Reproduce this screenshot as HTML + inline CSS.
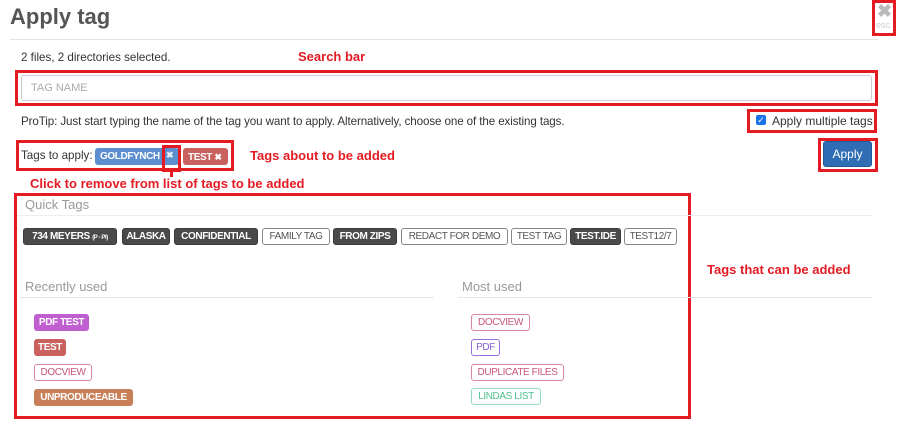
<!DOCTYPE html>
<html><head><meta charset="utf-8"><style>
*{box-sizing:border-box;margin:0;padding:0}
body{width:900px;height:430px;background:#fff;font-family:"Liberation Sans",sans-serif;color:#333;position:relative;overflow:hidden}
.a{position:absolute;white-space:nowrap}
.red{position:absolute;border:3px solid #e41b23}
.rt{position:absolute;color:#e41b23;font-weight:bold;font-size:13px;white-space:nowrap}
.b{position:absolute;height:17px;border-radius:3px;font-size:10px;font-weight:bold;line-height:16px;text-align:center;white-space:nowrap;letter-spacing:-0.4px;border:1px solid transparent;overflow:hidden}
.d{background:#4a4a4a;color:#fff;border-color:#3a3a3a}
.o{background:#fff;color:#555;border-color:#888;font-weight:normal}
.hl{position:absolute;height:1px;background:#e5e5e5}
.gr{color:#999;font-size:12px}
</style></head><body>
<div class="a" style="left:10px;top:4px;font-size:22px;font-weight:bold;color:#555">Apply tag</div>
<div class="hl" style="left:10px;top:39px;width:868px"></div>
<div class="red" style="left:872px;top:0;width:24px;height:36px"></div>
<div class="a" style="left:877px;top:2px;font-size:18px;font-weight:bold;color:#bbb;line-height:18px">✖</div>
<div class="a" style="left:876px;top:20px;font-size:9px;color:#ccc">esc</div>

<div class="a" style="left:21px;top:51px;font-size:11.6px">2 files, 2 directories selected.</div>
<div class="rt" style="left:298px;top:49px">Search bar</div>
<div class="red" style="left:15px;top:70px;width:863px;height:36px"></div>
<div class="a" style="left:21px;top:75px;width:851px;height:26px;border:1px solid #ccc;border-radius:3px"></div>
<div class="a" style="left:31px;top:82px;font-size:11px;color:#aaa">TAG NAME</div>

<div class="a" style="left:21px;top:115px;font-size:11.6px;letter-spacing:-0.1px">ProTip: Just start typing the name of the tag you want to apply. Alternatively, choose one of the existing tags.</div>
<div class="red" style="left:747px;top:109px;width:130px;height:24px"></div>
<div class="a" style="left:756px;top:115px;width:10px;height:10px;background:#1a73e8;border-radius:2px;color:#fff;font-size:9px;line-height:10px;text-align:center">✓</div>
<div class="a" style="left:772px;top:114px;font-size:12px">Apply multiple tags</div>

<div class="red" style="left:16px;top:140px;width:218px;height:31px"></div>
<div class="a" style="left:21px;top:149px;font-size:11.6px">Tags to apply:</div>
<div class="b" style="left:95px;top:148px;width:84px;background:#5b8fcf;color:#fff;text-align:left;padding-left:4px">GOLDFYNCH</div>
<div class="a" style="left:166px;top:150px;font-size:9px;color:#e8eef8;font-weight:bold">✖</div>
<div class="red" style="left:162px;top:145px;width:19px;height:27px"></div>
<div class="b" style="left:183px;top:148px;width:45px;background:#c9625f;color:#fff;text-align:left;padding-left:4px">TEST <span style="font-size:9px">✖</span></div>
<div class="rt" style="left:250px;top:148px">Tags about to be added</div>
<div class="a" style="left:170px;top:171px;width:3px;height:6px;background:#e41b23"></div>
<div class="rt" style="left:30px;top:176px">Click to remove from list of tags to be added</div>

<div class="red" style="left:818px;top:138px;width:60px;height:34px"></div>
<div class="a" style="left:823px;top:141px;width:49px;height:26px;background:#2f6db5;border:1px solid #245a99;border-radius:3px;color:#fff;font-size:12px;line-height:24px;text-align:center">Apply</div>

<div class="red" style="left:14px;top:193px;width:677px;height:226px"></div>
<div class="a gr" style="left:25px;top:197px;font-size:13px">Quick Tags</div>
<div class="hl" style="left:17px;top:215px;width:855px;background:#eee"></div>
<div class="b d" style="left:23px;top:228px;width:94px">734 MEYERS <span style="font-size:6px">(P - PI)</span></div>
<div class="b d" style="left:122px;top:228px;width:48px">ALASKA</div>
<div class="b d" style="left:174px;top:228px;width:84px">CONFIDENTIAL</div>
<div class="b o" style="left:262px;top:228px;width:68px">FAMILY TAG</div>
<div class="b d" style="left:333px;top:228px;width:64px">FROM ZIPS</div>
<div class="b o" style="left:401px;top:228px;width:107px">REDACT FOR DEMO</div>
<div class="b o" style="left:511px;top:228px;width:56px">TEST TAG</div>
<div class="b d" style="left:570px;top:228px;width:51px">TEST.IDE</div>
<div class="b o" style="left:624px;top:228px;width:53px">TEST12/7</div>

<div class="rt" style="left:707px;top:262px">Tags that can be added</div>
<div class="a gr" style="left:25px;top:279px;font-size:13px">Recently used</div>
<div class="hl" style="left:20px;top:297px;width:414px"></div>
<div class="a gr" style="left:462px;top:279px;font-size:13px">Most used</div>
<div class="hl" style="left:458px;top:297px;width:414px"></div>

<div class="b" style="left:34px;top:314px;width:55px;background:#c05fd0;color:#fff">PDF TEST</div>
<div class="b" style="left:34px;top:339px;width:32px;background:#c9625f;color:#fff">TEST</div>
<div class="b" style="left:34px;top:364px;width:58px;border-color:#d987a0;color:#c8557a;font-weight:normal">DOCVIEW</div>
<div class="b" style="left:34px;top:389px;width:99px;background:#c98058;color:#fff">UNPRODUCEABLE</div>

<div class="b" style="left:471px;top:314px;width:59px;border-color:#d987a0;color:#c8557a;font-weight:normal">DOCVIEW</div>
<div class="b" style="left:471px;top:339px;width:29px;border-color:#9a6fd8;color:#8a5fd0;font-weight:normal">PDF</div>
<div class="b" style="left:471px;top:364px;width:93px;border-color:#d987a0;color:#c8557a;font-weight:normal">DUPLICATE FILES</div>
<div class="b" style="left:471px;top:388px;width:70px;border-color:#8fdcbc;color:#4fbf90;font-weight:normal">LINDAS LIST</div>
</body></html>
